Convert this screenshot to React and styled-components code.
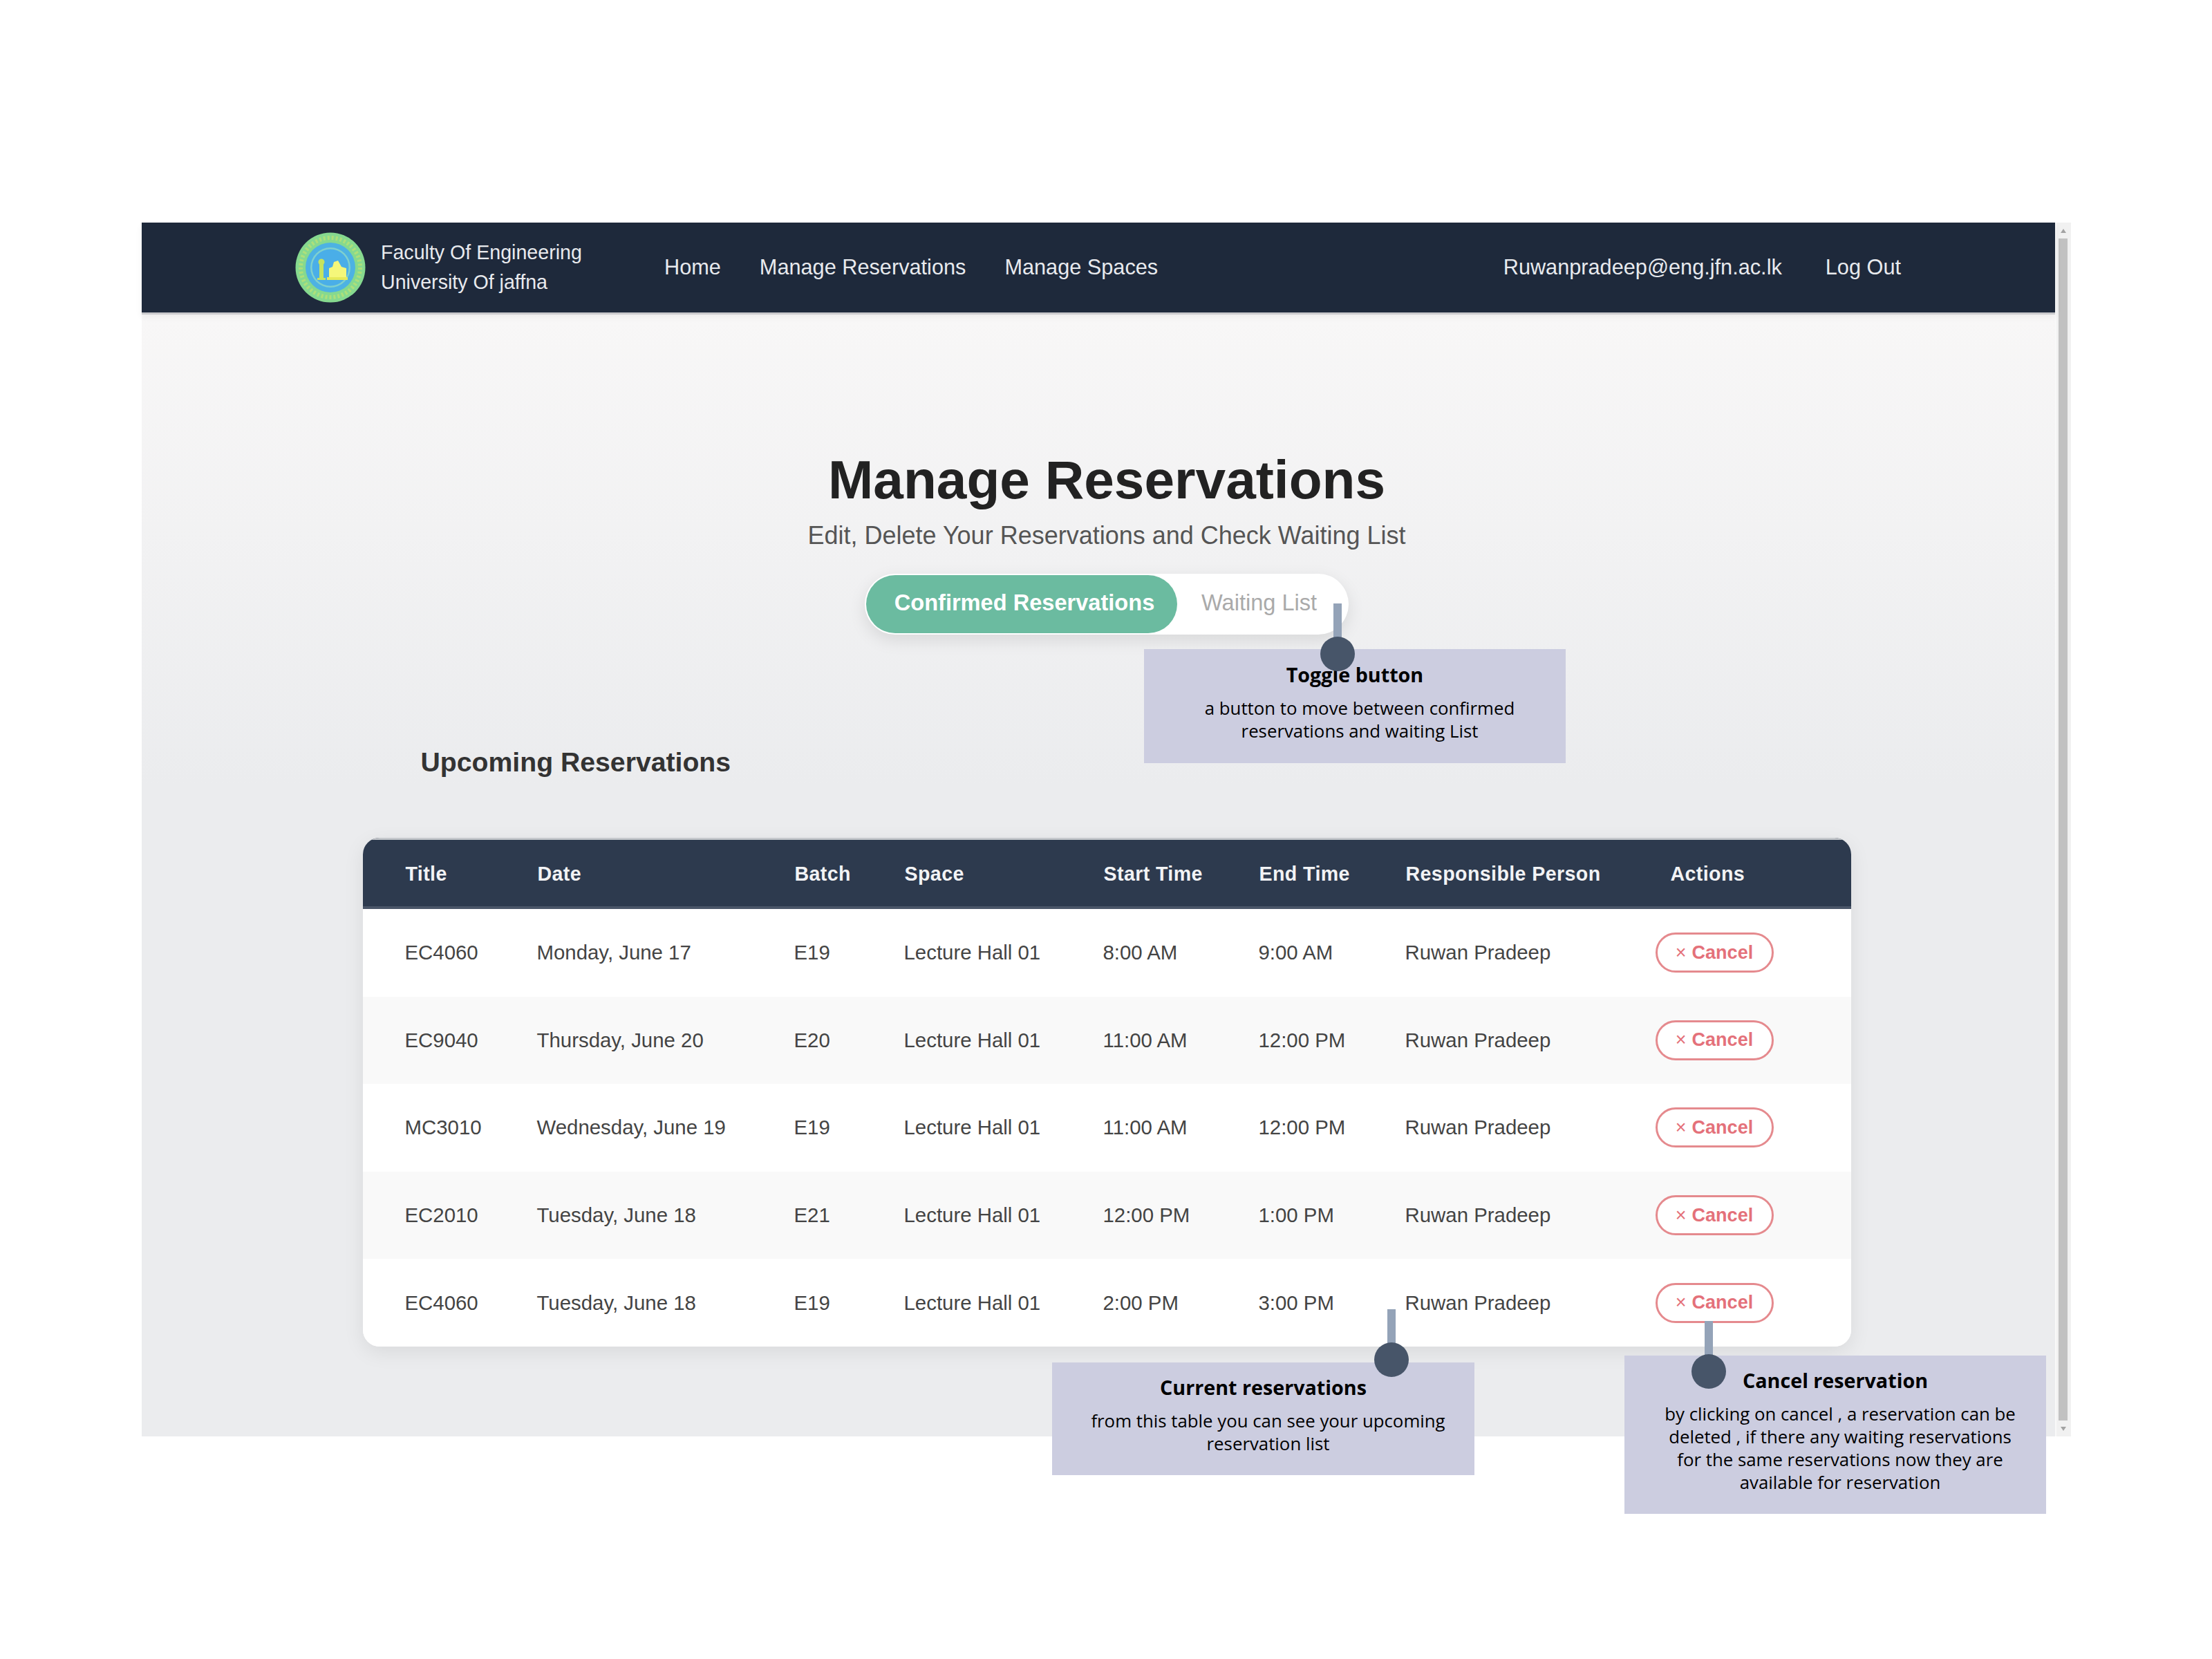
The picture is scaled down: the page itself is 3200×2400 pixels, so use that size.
import React from 'react';
import styled, { createGlobalStyle } from 'styled-components';

const Global = createGlobalStyle`
  html, body { margin: 0; padding: 0; background: #fff; }
  * { box-sizing: border-box; }
`;

const Page = styled.div`
  position: relative;
  width: 3200px;
  height: 2400px;
  padding: 322px 204px 0 205px;
  background: #fff;
  font-family: "Liberation Sans", Arial, sans-serif;
`;

const Frame = styled.div`
  display: flex;
  height: 1756px;
`;

const Window = styled.div`
  flex: 1;
  display: flex;
  flex-direction: column;
  min-width: 0;
`;

const NavBar = styled.header`
  flex: none;
  display: flex;
  align-items: center;
  height: 130px;
  padding: 0 223px 0 222px;
  background: #1e293b;
  color: #e8eaee;
  font-size: 30.7px;
  box-shadow: 0 3px 0 #c9c9cc, 0 6px 10px rgba(0, 0, 0, 0.06);
  position: relative;
  z-index: 1;
`;

const Brand = styled.div`
  display: flex;
  align-items: center;
  gap: 22px;
  margin-right: 118px;
`;

const BrandText = styled.div`
  font-size: 28.6px;
  line-height: 43px;
  width: 292px;
  white-space: nowrap;
`;

const NavLinks = styled.nav`
  display: flex;
  gap: 56px;
`;

const NavRight = styled.div`
  margin-left: auto;
  display: flex;
  gap: 63px;
`;

const Main = styled.main`
  flex: 1;
  display: flex;
  flex-direction: column;
  align-items: center;
  padding: 202px 0 0 24px;
  background: linear-gradient(180deg, #f8f7f7 0%, #ebecee 42%, #ebecee 100%);
`;

const Title = styled.h1`
  margin: 0;
  font-size: 78.4px;
  line-height: 80px;
  font-weight: 700;
  color: #222;
`;

const Subtitle = styled.p`
  margin: 19px 0 33px;
  font-size: 36px;
  line-height: 44px;
  color: #555;
`;

const Toggle = styled.div`
  display: flex;
  align-items: center;
  width: 700px;
  height: 88px;
  padding: 2px;
  background: #fff;
  border-radius: 44px;
  box-shadow: 0 8px 24px rgba(0, 0, 0, 0.1);
`;

const ToggleOption = styled.div`
  height: 84px;
  display: flex;
  align-items: center;
  justify-content: center;
  font-size: 32.6px;
  padding: 0 0 4px ${(p) => (p.$active ? '8px' : '0')};
  border-radius: 42px;
  width: ${(p) => (p.$active ? '450px' : 'auto')};
  margin-left: ${(p) => (p.$active ? '0' : '35px')};
  background: ${(p) => (p.$active ? '#6bbba0' : 'transparent')};
  color: ${(p) => (p.$active ? '#fff' : '#aaa')};
  font-weight: ${(p) => (p.$active ? 700 : 400)};
`;

const Content = styled.section`
  width: 2153px;
  margin-top: 161px;
`;

const SectionTitle = styled.h2`
  margin: 0 0 85px 84px;
  font-size: 39.2px;
  line-height: 48px;
  font-weight: 700;
  color: #333;
`;

const Table = styled.div`
  border-radius: 24px;
  overflow: hidden;
  background: #fff;
  box-shadow: 0 8px 30px rgba(0, 0, 0, 0.08);
`;

const Row = styled.div`
  display: grid;
  grid-template-columns: 191px 372px 159px 288px 225px 212px 363px 1fr;
  align-items: center;
`;

const HeadRow = styled(Row)`
  height: 103px;
  padding-left: 62px;
  padding-top: 3px;
  background: #2d3a4e;
  border-top: 3px solid #c4c7cb;
  border-bottom: 4px solid #4a5568;
  color: #f2f3f5;
  font-size: 28.6px;
  font-weight: 700;
  letter-spacing: 0.4px;
`;

const BodyRow = styled(Row)`
  height: 126.6px;
  padding-left: 61px;
  font-size: 29.4px;
  color: #444;
  background: ${(p) => (p.$alt ? '#f9f9f9' : '#fff')};
`;

const ActionHead = styled.div`
  padding-left: 20px;
`;

const CancelButton = styled.button`
  display: block;
  width: 171px;
  height: 58px;
  margin-left: -1px;
  border: 3px solid #e58a8e;
  border-radius: 29px;
  background: #fff;
  color: #e4717a;
  font-family: inherit;
  font-size: 27px;
  font-weight: 700;
  padding: 0;
  text-align: center;
`;

const CancelMark = styled.span`
  font-weight: 400;
  margin-right: 8px;
`;

const Scrollbar = styled.div`
  flex: none;
  width: 23px;
  display: flex;
  flex-direction: column;
  padding: 0 5px 0 3px;
  background: #f1f1f1;
  border-left: 2px solid #f9f9f9;
`;

const ScrollArrow = styled.div`
  flex: none;
  height: 23px;
  display: flex;
  align-items: center;
  justify-content: center;
`;

const ScrollThumb = styled.div`
  flex: 1;
  background: #c1c1c1;
`;

const Note = styled.aside`
  position: absolute;
  left: ${(p) => p.$x}px;
  top: ${(p) => p.$y}px;
  width: ${(p) => p.$w}px;
  height: ${(p) => p.$h}px;
  padding: ${(p) => p.$pad}px 0 0;
  background: #cccde0;
  color: #000;
  font-family: "Open Sans", "Noto Sans", sans-serif;
  text-align: center;
`;

const NoteTitle = styled.div`
  font-size: 28.7px;
  line-height: 40px;
  font-weight: 700;
`;

const NoteText = styled.div`
  font-size: 25.8px;
  line-height: 33px;
  margin: 12px 0 0 14px;
`;

const Stem = styled.div`
  position: absolute;
  left: ${(p) => p.$x}px;
  top: ${(p) => p.$y}px;
  width: 12px;
  height: 60px;
  background: #94a3b8;
`;

const Dot = styled.div`
  position: absolute;
  left: ${(p) => p.$x}px;
  top: ${(p) => p.$y}px;
  width: 50px;
  height: 50px;
  border-radius: 50%;
  background: #475569;
`;

const Logo = () => (
  <svg width="102" height="102" viewBox="0 0 102 102">
    <circle cx="51" cy="51" r="50.5" fill="#86d98f" />
    <circle cx="51" cy="51" r="43" fill="none" stroke="#aee07a" strokeWidth="6" strokeDasharray="3 3" />
    <circle cx="51" cy="51" r="36" fill="#4db2e3" />
    <circle cx="51" cy="51" r="29" fill="#7fd0ce" />
    <circle cx="51" cy="51" r="26.5" fill="#4aaee8" />
    <rect x="35" y="42" width="6" height="25" fill="#c6e35e" />
    <circle cx="38" cy="43" r="4.5" fill="#c6e35e" />
    <rect x="32" y="66" width="12" height="3" fill="#c6e35e" />
    <path d="M49 66 V52 L54 50 L56 43 L62 41 L67 50 L74 52 V66 Z" fill="#f5f77a" />
    <rect x="46" y="65" width="30" height="4" fill="#e6ea5a" />
  </svg>
);

const Up = () => (
  <svg width="10" height="8" viewBox="0 0 10 8"><path d="M5 1 L9 7 H1 Z" fill="#a3a3a3" /></svg>
);
const Down = () => (
  <svg width="10" height="8" viewBox="0 0 10 8"><path d="M1 1 H9 L5 7 Z" fill="#a3a3a3" /></svg>
);

const headers = ['Title', 'Date', 'Batch', 'Space', 'Start Time', 'End Time', 'Responsible Person'];
const rows = [
  ['EC4060', 'Monday, June 17', 'E19', 'Lecture Hall 01', '8:00 AM', '9:00 AM', 'Ruwan Pradeep'],
  ['EC9040', 'Thursday, June 20', 'E20', 'Lecture Hall 01', '11:00 AM', '12:00 PM', 'Ruwan Pradeep'],
  ['MC3010', 'Wednesday, June 19', 'E19', 'Lecture Hall 01', '11:00 AM', '12:00 PM', 'Ruwan Pradeep'],
  ['EC2010', 'Tuesday, June 18', 'E21', 'Lecture Hall 01', '12:00 PM', '1:00 PM', 'Ruwan Pradeep'],
  ['EC4060', 'Tuesday, June 18', 'E19', 'Lecture Hall 01', '2:00 PM', '3:00 PM', 'Ruwan Pradeep'],
];

export default function App() {
  return (
    <Page>
      <Global />
      <Frame>
        <Window>
          <NavBar>
            <Brand>
              <Logo />
              <BrandText>
                Faculty Of Engineering
                <br />
                University Of jaffna
              </BrandText>
            </Brand>
            <NavLinks>
              <span>Home</span>
              <span>Manage Reservations</span>
              <span>Manage Spaces</span>
            </NavLinks>
            <NavRight>
              <span>Ruwanpradeep@eng.jfn.ac.lk</span>
              <span>Log Out</span>
            </NavRight>
          </NavBar>
          <Main>
            <Title>Manage Reservations</Title>
            <Subtitle>Edit, Delete Your Reservations and Check Waiting List</Subtitle>
            <Toggle>
              <ToggleOption $active>Confirmed Reservations</ToggleOption>
              <ToggleOption>Waiting List</ToggleOption>
            </Toggle>
            <Content>
              <SectionTitle>Upcoming Reservations</SectionTitle>
              <Table>
                <HeadRow>
                  {headers.map((h) => (
                    <div key={h}>{h}</div>
                  ))}
                  <ActionHead>Actions</ActionHead>
                </HeadRow>
                {rows.map((r, i) => (
                  <BodyRow key={i} $alt={i % 2 === 1}>
                    {r.map((c, j) => (
                      <div key={j}>{c}</div>
                    ))}
                    <div>
                      <CancelButton>
                        <CancelMark>×</CancelMark>Cancel
                      </CancelButton>
                    </div>
                  </BodyRow>
                ))}
              </Table>
            </Content>
          </Main>
        </Window>
        <Scrollbar>
          <ScrollArrow><Up /></ScrollArrow>
          <ScrollThumb />
          <ScrollArrow><Down /></ScrollArrow>
        </Scrollbar>
      </Frame>

      <Note $x={1655} $y={939} $w={610} $h={165} $pad={17}>
        <NoteTitle>Toggle button</NoteTitle>
        <NoteText>
          a button to move between confirmed
          <br />
          reservations and waiting List
        </NoteText>
      </Note>
      <Stem $x={1929} $y={873} />
      <Dot $x={1910} $y={921} />

      <Note $x={1522} $y={1971} $w={611} $h={163} $pad={16}>
        <NoteTitle>Current reservations</NoteTitle>
        <NoteText>
          from this table you can see your upcoming
          <br />
          reservation list
        </NoteText>
      </Note>
      <Stem $x={2007} $y={1894} />
      <Dot $x={1988} $y={1942} />

      <Note $x={2350} $y={1961} $w={610} $h={229} $pad={16}>
        <NoteTitle>Cancel reservation</NoteTitle>
        <NoteText>
          by clicking on cancel , a reservation can be
          <br />
          deleted , if there any waiting reservations
          <br />
          for the same reservations now they are
          <br />
          available for reservation
        </NoteText>
      </Note>
      <Stem $x={2466} $y={1911} />
      <Dot $x={2447} $y={1959} />
    </Page>
  );
}
